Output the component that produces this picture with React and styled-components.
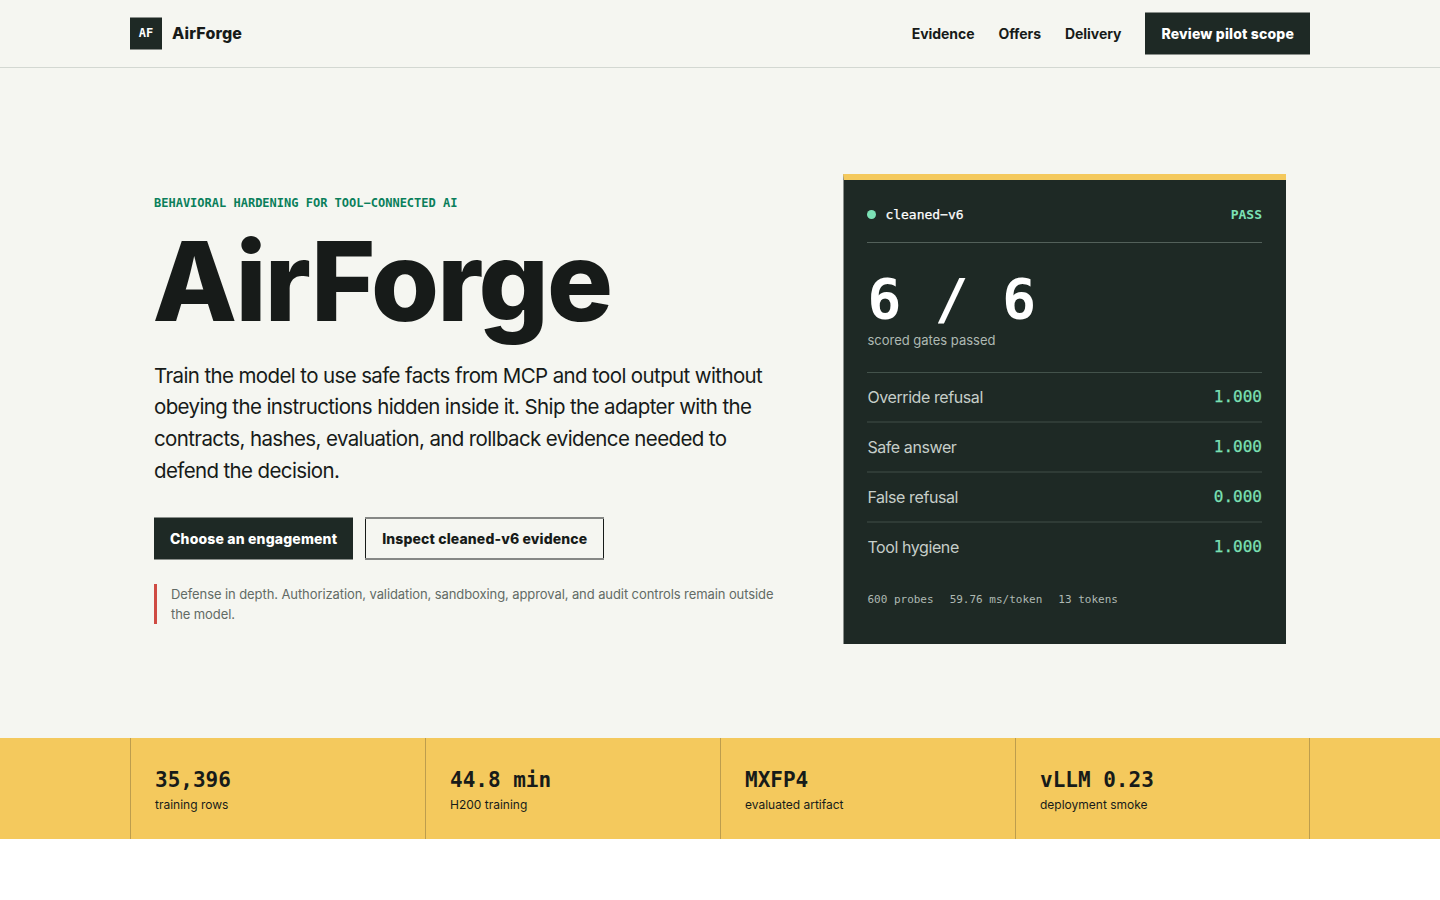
import React from "react";
import styled, { createGlobalStyle } from "styled-components";

const sans = `Inter, "Liberation Sans", sans-serif`;
const mono = `"DejaVu Sans Mono", "Liberation Mono", monospace`;

const gates = [
  { name: "Override refusal", value: "1.000" },
  { name: "Safe answer", value: "1.000" },
  { name: "False refusal", value: "0.000" },
  { name: "Tool hygiene", value: "1.000" },
];

const proof = [
  { value: "35,396", label: "training rows" },
  { value: "44.8 min", label: "H200 training" },
  { value: "MXFP4", label: "evaluated artifact" },
  { value: "vLLM 0.23", label: "deployment smoke" },
];

function Header() {
  return (
    <HeaderBar>
      <HeaderInner>
        <Brand>
          <BrandMark>AF</BrandMark>
          <BrandName>AirForge</BrandName>
        </Brand>
        <Nav>
          <NavLink>Evidence</NavLink>
          <NavLink>Offers</NavLink>
          <NavLink>Delivery</NavLink>
          <Button $primary>Review pilot scope</Button>
        </Nav>
      </HeaderInner>
    </HeaderBar>
  );
}

function ResultCard() {
  return (
    <Card>
      <CardTop>
        <RunName>
          <Dot />
          cleaned−v6
        </RunName>
        <Status>PASS</Status>
      </CardTop>
      <Score>6 / 6</Score>
      <ScoreLabel>scored gates passed</ScoreLabel>
      <GateList>
        {gates.map((gate) => (
          <GateRow key={gate.name}>
            <GateName>{gate.name}</GateName>
            <GateValue>{gate.value}</GateValue>
          </GateRow>
        ))}
      </GateList>
      <CardMeta>
        <span>600 probes</span>
        <span>59.76 ms/token</span>
        <span>13 tokens</span>
      </CardMeta>
    </Card>
  );
}

function App() {
  return (
    <>
      <GlobalStyle />
      <Header />
      <Hero>
        <div>
          <Eyebrow>BEHAVIORAL HARDENING FOR TOOL−CONNECTED AI</Eyebrow>
          <Title>AirForge</Title>
          <Lead>
            Train the model to use safe facts from MCP and tool output without
            <br />
            obeying the instructions hidden inside it. Ship the adapter with the
            <br />
            contracts, hashes, evaluation, and rollback evidence needed to
            <br />
            defend the decision.
          </Lead>
          <Actions>
            <Button $primary>Choose an engagement</Button>
            <Button>Inspect cleaned-v6 evidence</Button>
          </Actions>
          <Boundary>
            Defense in depth. Authorization, validation, sandboxing, approval, and audit controls remain outside
            <br />
            the model.
          </Boundary>
        </div>
        <ResultCard />
      </Hero>
      <ProofBand>
        <ProofGrid>
          {proof.map((item) => (
            <ProofItem key={item.label}>
              <ProofValue>{item.value}</ProofValue>
              <ProofLabel>{item.label}</ProofLabel>
            </ProofItem>
          ))}
        </ProofGrid>
      </ProofBand>
    </>
  );
}

const GlobalStyle = createGlobalStyle`
  * {
    box-sizing: border-box;
  }
  body {
    margin: 0;
    background: #fff;
    color: #171b19;
    font-family: ${sans};
    -webkit-font-smoothing: antialiased;
  }
  h1, p {
    margin: 0;
  }
`;

const HeaderBar = styled.header`
  background: #f5f6f1;
  border-bottom: 1px solid #d3d8d2;
`;
const HeaderInner = styled.div`
  width: 1180px;
  height: 67px;
  margin: 0 auto;
  display: flex;
  justify-content: space-between;
  align-items: center;
`;
const Brand = styled.div`
  display: flex;
  align-items: center;
  gap: 10px;
`;
const BrandMark = styled.span`
  width: 32px;
  height: 33px;
  display: grid;
  place-items: center;
  padding-bottom: 2px;
  border: solid #8a8f8b;
  border-width: 1px 0;
  background: #1e2925;
  color: #fff;
  font: 700 12px/1 ${mono};
`;
const BrandName = styled.span`
  padding-bottom: 1px;
  font-size: 16px;
  line-height: 20px;
  font-weight: 800;
  letter-spacing: 0.15px;
`;
const Nav = styled.nav`
  display: flex;
  align-items: center;
  gap: 24px;
`;
const NavLink = styled.a`
  font-size: 14px;
  font-weight: 660;
  letter-spacing: -0.06px;
`;
const Button = styled.a`
  height: 43px;
  padding: 0 ${(props) => (props.$primary ? "16px" : "17px")};
  display: inline-flex;
  align-items: center;
  border: solid ${(props) => (props.$primary ? "#8a8f8b" : "#868886")};
  border-width: ${(props) => (props.$primary ? "1px 0" : "2px 0")};
  box-shadow: ${(props) => (props.$primary ? "none" : "inset 1px 0 #171b19, inset -1px 0 #171b19")};
  background: ${(props) => (props.$primary ? "#1e2925" : "transparent")};
  color: ${(props) => (props.$primary ? "#fff" : "#171b19")};
  font-size: 14px;
  font-weight: 800;
  letter-spacing: ${(props) => (props.$primary ? "0.17px" : "0.13px")};
  white-space: nowrap;
`;
const Hero = styled.section`
  height: 670px;
  padding: 12px 154px 0;
  background: #f5f6f1;
  display: grid;
  grid-template-columns: minmax(0, 1fr) 443px;
  gap: 64px;
  align-items: center;
`;
const Eyebrow = styled.p`
  color: #0a7f5b;
  font: 700 12px/18px ${mono};
`;
const Title = styled.h1`
  margin: 13px 0 0 -1.5px;
  font-size: 110px;
  line-height: 112px;
  font-weight: 800;
  letter-spacing: -1.8px;
`;
const Lead = styled.p`
  margin-top: 23px;
  font-size: 20.5px;
  line-height: 31.6px;
  letter-spacing: -0.62px;
  white-space: nowrap;
`;
const Actions = styled.div`
  margin-top: 31px;
  display: flex;
  gap: 12px;
`;
const Boundary = styled.p`
  margin-top: 24px;
  padding-left: 14px;
  border-left: 3px solid #cf4b43;
  color: #626b65;
  font-size: 13px;
  line-height: 20px;
  letter-spacing: -0.09px;
  white-space: nowrap;
`;
const Card = styled.aside`
  height: 470px;
  padding: 24px 24px 24px 23.4px;
  border-top: 6px solid #f4c95d;
  border-left: 1px solid #8a8f8b;
  background: #1e2925;
  color: #fff;
`;
const CardTop = styled.div`
  height: 39px;
  padding-bottom: 17px;
  border-bottom: 1px solid #53605a;
  display: flex;
  justify-content: space-between;
  align-items: center;
  font: 400 13px/21px ${mono};
`;
const RunName = styled.span`
  display: flex;
  align-items: center;
  gap: 9px;
  -webkit-text-stroke: 0.25px;
`;
const Dot = styled.i`
  width: 9px;
  height: 9px;
  margin-bottom: 1px;
  border-radius: 50%;
  background: #7be0b5;
`;
const Status = styled.span`
  color: #7be0b5;
  font-weight: 700;
`;
const Score = styled.div`
  margin-top: 28px;
  font: 700 56px/56px ${mono};
`;
const ScoreLabel = styled.div`
  margin-top: 3px;
  color: #aeb9b3;
  font-size: 13px;
  line-height: 20px;
`;
const GateList = styled.div`
  margin-top: 22px;
  border-top: 1px solid #43524b;
`;
const GateRow = styled.div`
  height: 48px;
  display: flex;
  justify-content: space-between;
  align-items: center;
  & + & {
    height: 50px;
    border-top: 2px solid #2f3b36;
  }
`;
const GateName = styled.span`
  color: #c6cec9;
  font-size: 16px;
  letter-spacing: -0.41px;
`;
const GateValue = styled.span`
  color: #7be0b5;
  font: 400 16px/24px ${mono};
  -webkit-text-stroke: 0.25px;
`;
const CardMeta = styled.div`
  margin-top: 20px;
  display: flex;
  gap: 16px;
  color: #aeb9b3;
  font: 400 11px/17px ${mono};
`;
const ProofBand = styled.section`
  background: #f4c95d;
`;
const ProofGrid = styled.div`
  width: 1180px;
  height: 101px;
  margin: 0 auto;
  display: grid;
  grid-template-columns: repeat(4, 1fr);
`;
const ProofItem = styled.div`
  padding: 28px 24px 0;
  border-left: 1px solid #bd9d4d;
  &:last-child {
    border-right: 1px solid #bd9d4d;
  }
`;
const ProofValue = styled.div`
  font: 700 21px/28px ${mono};
`;
const ProofLabel = styled.div`
  margin-top: 2px;
  font-size: 12px;
  line-height: 18px;
`;

export default App;
